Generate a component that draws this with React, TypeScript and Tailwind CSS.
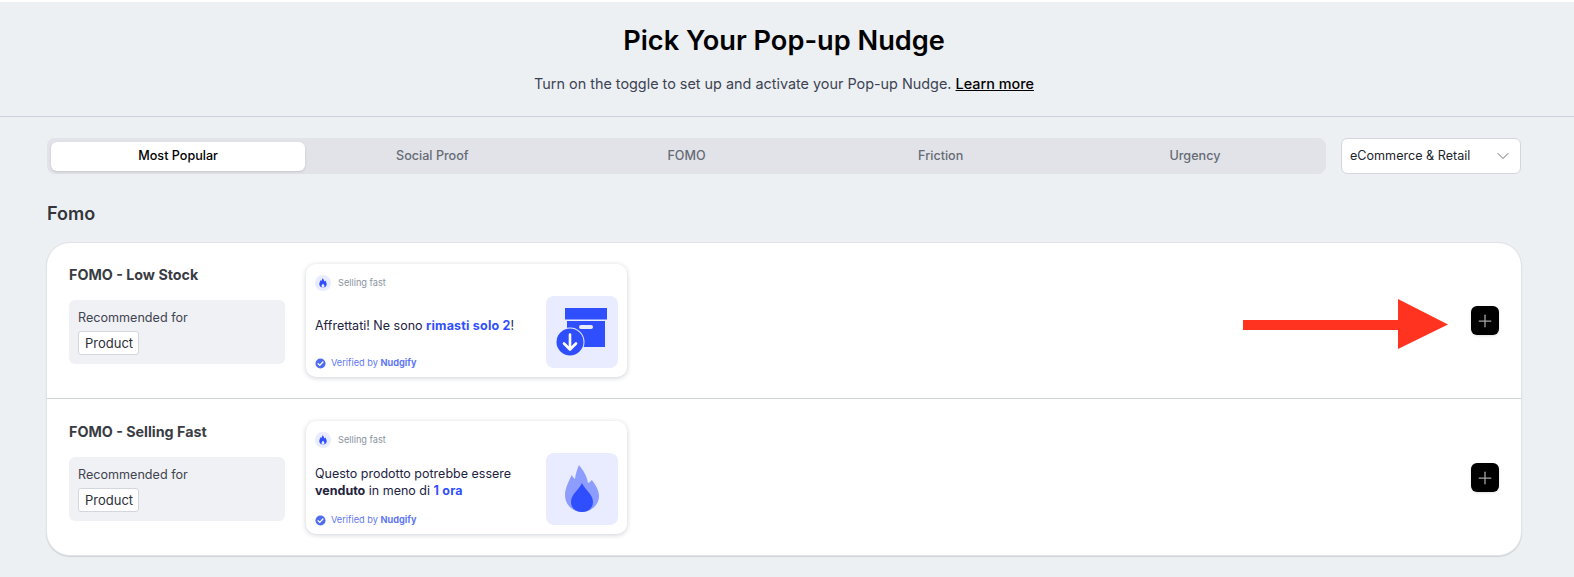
import { ChevronDown, Plus } from "lucide-react";

const tabs = ["Most Popular", "Social Proof", "FOMO", "Friction", "Urgency"];

const Flame = ({ className }: { className?: string }) => (
  <svg viewBox="0 0 72 72" className={className}>
    <path
      fill="#8c9dff"
      d="M33 12C31 17 29.500 21 29 26C28 25 26.800 24 25.700 22C23 28 19 35 19 42C19 52 27 59 36 59C45 59 53 52 53 43C53 37 49 31 45.700 27C44.500 28.500 43.500 29.500 42 30C41 23 37 17 33 12Z"
    />
    <path fill="#2f4fff" d="M36 30C39 37 47 41 47 49C47 55 42 59 36 59C30 59 25 55 25 49C25 41 33 37 36 30Z" />
  </svg>
);

const SmallFlame = () => (
  <svg viewBox="0 0 16 16" className="h-4 w-4">
    <circle cx="8" cy="8" r="8" fill="#e9ecfe" />
    <path
      fill="#2f4fff"
      d="M7.600 3.200C7.200 4.300 6.700 5 6.500 6C6.200 5.800 6 5.500 5.800 5.100C5.200 6.500 4.300 7.700 4.300 9.200C4.300 11.200 6 12.500 8 12.500C10 12.500 11.700 11.200 11.700 9.200C11.700 7.800 11 6.500 10.200 5.500C10 6 9.700 6.300 9.300 6.500C9.200 5.200 8.500 4.200 7.600 3.200Z"
    />
    <path fill="#e9ecfe" d="M8 8.500C8.500 9.500 9.500 10 9.500 11C9.500 11.900 8.800 12.500 8 12.500C7.200 12.500 6.500 11.900 6.500 11C6.500 10 7.500 9.500 8 8.500Z" />
  </svg>
);

const BoxIcon = () => (
  <svg viewBox="0 0 72 72" className="h-[72px] w-[72px]">
    <rect x="19" y="12" width="42" height="11.500" fill="#2f4fff" />
    <rect x="21" y="25" width="38" height="26" fill="#2f4fff" />
    <rect x="33" y="29" width="14" height="4" rx="2" fill="#e9ecfe" />
    <circle cx="24" cy="46" r="14.500" fill="#e9ecfe" />
    <circle cx="24" cy="46" r="13.500" fill="#2f4fff" />
    <path d="M24 38.500V53M18 47.500L24 53.500L30 47.500" fill="none" stroke="#fff" strokeWidth="2.600" strokeLinecap="round" strokeLinejoin="round" />
  </svg>
);

const Verified = () => (
  <div className="flex items-center gap-[5px] text-[9.2px] leading-3 text-[#5f78f2]">
    <svg viewBox="0 0 12 12" className="h-[11px] w-[11px]">
      <circle cx="6" cy="6" r="5.500" fill="#4f6cf0" />
      <path d="M3.400 6.200L5.200 8L8.600 4.400" fill="none" stroke="#fff" strokeWidth="1.400" strokeLinecap="round" strokeLinejoin="round" />
    </svg>
    <span>
      Verified by <b className="font-bold">Nudgify</b>
    </span>
  </div>
);

const NudgeCard = ({ message, icon }: { message: React.ReactNode; icon: React.ReactNode }) => (
  <div className="relative flex h-[113px] w-[321px] shrink-0 flex-col justify-between rounded-[10px] bg-white pt-[11px] pr-[9px] pb-2 pl-[9px] shadow-[0_1px_5px_rgba(30,40,70,0.22)]">
    <div className="flex items-center gap-[7px] text-[9.2px] leading-4 text-[#8a93a0]">
      <SmallFlame />
      <span>Selling fast</span>
    </div>
    <div className="pr-[82px] text-[12.5px] leading-[17px] text-[#23233f]">{message}</div>
    <Verified />
    <div className="absolute top-8 right-[9px] flex h-[72px] w-[72px] items-center justify-center rounded-lg bg-[#e9ecfe]">{icon}</div>
  </div>
);

const NudgeRow = ({ title, message, icon, last }: { title: string; message: React.ReactNode; icon: React.ReactNode; last?: boolean }) => (
  <div className={`flex items-center pr-[22px] pl-[22px] ${last ? "pt-[22px] pb-[21px]" : "border-b border-[#cfd3da] pt-[21px] pb-[21px]"}`}>
    <div className="mr-[21px] flex h-[113px] w-[216px] shrink-0 flex-col">
      <h3 className="mt-[1px] text-[14.3px] leading-5 font-bold text-[#3a3c44]">{title}</h3>
      <div className="mt-[15px] h-16 rounded-md bg-[#f0f1f5] px-[9px] pt-[9px]">
        <div className="text-[12.6px] leading-[18px] text-[#3f4450]">Recommended for</div>
        <span className="mt-1 inline-block rounded-[3px] border border-[#d3d6dc] bg-white pr-[5px] pl-[6px] text-[13px] leading-[22px] text-[#2c2f38]">
          Product
        </span>
      </div>
    </div>
    <NudgeCard message={message} icon={icon} />
    <button className="ml-auto flex h-[29px] w-7 items-center justify-center rounded-md bg-black shadow-sm">
      <Plus size={20} strokeWidth={1.5} className="text-[#a8a8a8]" />
    </button>
  </div>
);

export default function App() {
  return (
    <div className="relative min-h-[577px] border-t-2 border-white bg-[#ecf0f3] font-['Inter',sans-serif]">
      <header className="flex h-[115px] flex-col items-center border-b border-[#cdd1da] pt-[23px] pr-[6px]">
        <h1 className="text-[27.2px] leading-8 font-semibold text-black">Pick Your Pop-up Nudge</h1>
        <p className="mt-4 text-[14.4px] leading-[22px] text-[#3c4354]">
          Turn on the toggle to set up and activate your Pop-up Nudge.{" "}
          <a className="font-medium text-black underline">Learn more</a>
        </p>
      </header>

      <main className="pt-[21px] pr-[53px] pl-[47px]">
        <div className="flex items-start gap-[15px]">
          <div className="flex h-9 flex-1 rounded-lg bg-[#e1e3e8] px-1 pt-1 pb-[3px]">
            {tabs.map((tab, i) => (
              <div
                key={tab}
                className={`flex flex-1 items-center justify-center rounded-md text-[12.6px] font-medium ${
                  i === 0 ? "bg-white text-black shadow-sm" : "text-[#666b75]"
                }`}
              >
                {tab}
              </div>
            ))}
          </div>
          <div className="flex h-9 w-[180px] items-center justify-between rounded-md border border-[#d3d6dc] bg-white pr-[7px] pl-2 text-[12.6px] text-[#22252c]">
            <span>eCommerce &amp; Retail</span>
            <ChevronDown size={20} strokeWidth={1} className="text-[#555]" />
          </div>
        </div>

        <h2 className="mt-[28px] text-lg leading-6 font-semibold text-[#33353c]">Fomo</h2>

        <div className="-mx-px mt-4 rounded-3xl border border-[#dfe2e7] bg-white shadow-[0_1px_1px_rgba(0,0,0,0.12)]">
          <NudgeRow
            title="FOMO - Low Stock"
            message={
              <div className="pt-[2px]">
                Affrettati! Ne sono <b className="font-bold tracking-[0.2px] text-[#2f4fff]">rimasti solo 2</b>!
              </div>
            }
            icon={<BoxIcon />}
          />
          <NudgeRow
            title="FOMO - Selling Fast"
            message={
              <div className="pt-[2px]">
                Questo prodotto potrebbe essere
                <br />
                <b className="font-bold">venduto</b> in meno di <b className="font-bold tracking-[0.2px] text-[#2f4fff]">1 ora</b>
              </div>
            }
            icon={<Flame className="h-[72px] w-[72px]" />}
            last
          />
        </div>
      </main>

      {/* red annotation arrow */}
      <svg viewBox="0 0 205 50" className="absolute top-[297px] left-[1243px] h-[50px] w-[205px]">
        <path fill="#ff331f" d="M0 21H155V0L205 25.500L155 50V31H0Z" />
      </svg>
    </div>
  );
}
